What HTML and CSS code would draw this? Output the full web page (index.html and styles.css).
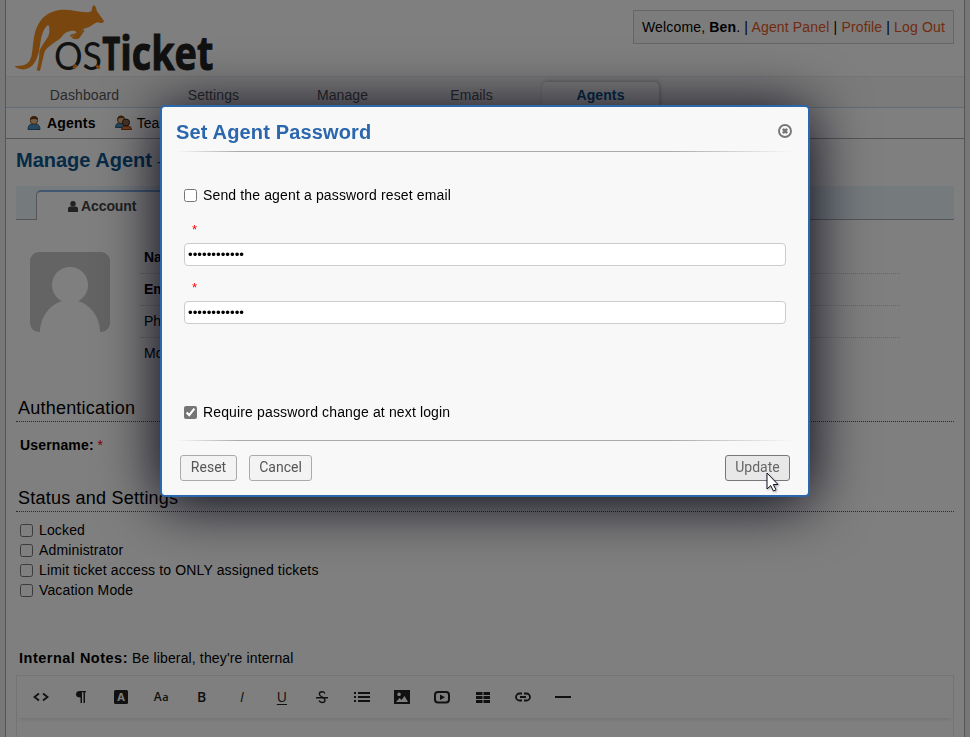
FILE: index.html
```html
<!DOCTYPE html>
<html lang="en">
<head>
<meta charset="utf-8">
<title>osTicket :: Staff Control Panel</title>
<link rel="stylesheet" href="styles.css">
</head>
<body>
<div class="page">
  <header class="header">
    <svg class="logo" viewBox="0 0 640 222" aria-label="osTicket">
      <path fill="#f38c1f" d="M44 198C74 199 89 193 95 166C99 143 99 120 106 94C116 60 140 35 178 30C208 26 233 36 260 37C268 36 272 35 275 32C275 25 278 18 281 15C288 18 289 26 290 32C294 38 298 43 302 49L312 63C311 69 305 71 292 67C282 70 277 77 265 82L250 87C240 95 241 111 231 117C226 119 221 117 220 115L213 111C216 109 222 110 226 105C231 100 231 95 222 92C207 91 193 97 184 112C176 121 158 130 145 142C132 153 134 157 129 175L120 213L110 211C114 196 118 178 118 157C118 145 135 126 145 108C151 94 148 77 144 75C135 82 128 94 124 112C119 140 117 166 106 184C95 205 76 211 60 207C52 205 47 202 44 198Z"/>
      <path fill="none" stroke="#f38c1f" stroke-width="6" stroke-linecap="round" d="M250 92L235 113L220 113M235 100L213 107"/>
      <text class="logo-os" x="162" y="209" textLength="144" lengthAdjust="spacingAndGlyphs">OS</text>
      <text class="logo-ticket" y="210"><tspan x="307" textLength="54" lengthAdjust="spacingAndGlyphs">T</tspan><tspan x="361" textLength="279" lengthAdjust="spacingAndGlyphs">icket</tspan></text>
      <path stroke="#f38c1f" stroke-width="9" d="M220 205l10-10M289 197l10 8"/>
    </svg>
    <p class="info">Welcome, <b>Ben</b>. | <a>Agent Panel</a> | <a>Profile</a> | <a>Log Out</a></p>
  </header>
  <nav class="nav">
    <a>Dashboard</a><a>Settings</a><a>Manage</a><a>Emails</a><a class="active">Agents</a>
  </nav>
  <nav class="subnav">
    <a class="current"><svg width="16" height="16" viewBox="0 0 16 16"><path fill="#4c8fc0" stroke="#2b5d80" d="M2 14.500q0-5 4-5.500h4q4 .5 4 5.500z"/><circle cx="8" cy="5.500" r="3.700" fill="#eab88a" stroke="#8a5a30"/><path fill="#704214" d="M4 5q0-4 4-4t4 4q-4-2-8 0"/></svg>Agents</a>
    <a><svg width="17" height="16" viewBox="0 0 17 16"><path fill="#4c8fc0" stroke="#2b5d80" d="M.5 12.500q0-4 3-4.500h5l2 4.500z"/><circle cx="6" cy="5" r="3.500" fill="#eab88a" stroke="#704214"/><path fill="#704214" d="M2 4q1-3.500 4-3.500t4 3q-4-1-8 .5"/><path fill="#e87532" stroke="#8f4016" d="M6.500 14.500q0-3 3-3.500h4q3 .5 3 3.500z"/><circle cx="11" cy="7.500" r="3.500" fill="#94694f" stroke="#352018"/></svg>Teams</a>
  </nav>
  <main class="content">
    <h2>Manage Agent <span>— Ben</span></h2>
    <div class="tabs"><a><svg width="10" height="11" viewBox="0 0 11 12"><circle cx="5.500" cy="3" r="3"/><path d="M0 12V9q0-3 2.500-3h6Q11 6 11 9v3z"/></svg>Account</a></div>
    <section class="profile">
      <svg class="avatar" width="80" height="80" viewBox="0 0 80 80"><rect width="80" height="80" rx="9" fill="#c8c8c8"/><circle cx="40" cy="33" r="18" fill="#fff"/><path fill="#fff" d="M10 80C10 64 22 48 40 48S70 64 70 80z"/></svg>
      <div class="fields"><div><b>Name:</b></div><div><b>Email:</b></div><div>Phone:</div><div>Mobile:</div></div>
    </section>
    <h3>Authentication</h3>
    <p class="username"><b>Username:</b> <span>*</span></p>
    <h3>Status and Settings</h3>
    <div class="checks">
      <label><input type="checkbox">Locked</label>
      <label><input type="checkbox">Administrator</label>
      <label><input type="checkbox">Limit ticket access to ONLY assigned tickets</label>
      <label><input type="checkbox">Vacation Mode</label>
    </div>
    <p class="notes"><b>Internal Notes:</b> Be liberal, they're internal</p>
    <div class="editor">
      <div class="toolbar">
        <i><svg viewBox="0 0 16 16" fill="none" stroke="#222" stroke-width="1.800"><path d="M6 4.500L1.500 8 6 11.500M10 4.500L14.500 8 10 11.500"/></svg></i>
        <i><svg viewBox="0 0 16 16"><path d="M7 2h6v1.300h-1V14h-1.500V3.300H9V14H7.500V8.500Q3 8.500 3 5.300T7 2z"/></svg></i>
        <i><svg viewBox="0 0 16 16"><rect x="1" y="1" width="14" height="14" rx="1.500"/><text class="ic-inv" x="8" y="12">A</text></svg></i>
        <i class="aa">A<small>a</small></i>
        <i class="bold">B</i>
        <i class="ital">I</i>
        <i class="under">U</i>
        <i class="strike"><svg viewBox="0 0 16 16" fill="none" stroke="#222" stroke-width="1.400"><path d="M11 4.500Q10 2.700 8 2.700 5.300 2.700 5.300 5q0 1.500 2.700 3 3 1.500 3 3.200Q11 13.500 8 13.500 6 13.500 5 11.700M2 8.700h12"/></svg></i>
        <i><svg viewBox="0 0 16 16"><path d="M0 3h2v2H0zm4 0h12v2H4zM0 7h2v2H0zm4 0h12v2H4zM0 11h2v2H0zm4 0h12v2H4z"/></svg></i>
        <i><svg viewBox="0 0 16 16"><path fill-rule="evenodd" d="M0 1h16v14H0zM5 3.500a1.800 1.800 0 1 0 .1 0zM2 13h12l-3.500-6-3 4-2-2z"/></svg></i>
        <i><svg viewBox="0 0 16 16"><rect x="1" y="3" width="14" height="10.500" rx="3" fill="none" stroke="#222" stroke-width="2"/><path d="M6 5.500l5 2.700-5 2.700z"/></svg></i>
        <i><svg viewBox="0 0 16 16"><path d="M1 3h6.500v3H1zm7.500 0H15v3H8.500zM1 7h6.500v3H1zm7.500 0H15v3H8.500zM1 11h6.500v3H1zm7.500 0H15v3H8.500z"/></svg></i>
        <i><svg viewBox="0 0 16 16" fill="none" stroke="#222" stroke-width="1.800"><path d="M7 4.500H4.500a3.500 3.500 0 0 0 0 7H7M9 4.500h2.500a3.500 3.500 0 0 1 0 7H9M5 8h6"/></svg></i>
        <i><svg viewBox="0 0 16 16"><path d="M0 7h16v2H0z"/></svg></i>
      </div>
    </div>
  </main>
</div>
<div class="overlay"></div>
<div class="dialog" role="dialog">
  <div class="title"><h1>Set Agent Password</h1>
    <svg width="14" height="14" viewBox="0 0 14 14"><circle cx="7" cy="7" r="6" fill="none" stroke="#777" stroke-width="1.900"/><path d="M4.900 4.900l4.200 4.200M9.100 4.900L4.900 9.100" stroke="#777" stroke-width="2.600"/></svg></div>
  <div class="rule"></div>
  <form>
    <label class="send"><input type="checkbox">Send the agent a password reset email</label>
    <div class="req">*</div>
    <input class="pw" type="password" value="abcdefghijkl">
    <div class="req second">*</div>
    <input class="pw" type="password" value="abcdefghijkl">
    <label class="require"><input type="checkbox" checked>Require password change at next login</label>
  </form>
  <div class="rule"></div>
  <div class="buttons"><button>Reset</button><button>Cancel</button><button class="update">Update</button></div>
  <svg class="cursor" width="14" height="22" viewBox="0 0 14 22"><path fill="#fff" stroke="#112" d="M1 1v16l3.700-3.500 2.700 5.500 2.600-1.200-2.700-5.300H12z"/></svg>
</div>
</body>
</html>
```
FILE: styles.css
```css
* { box-sizing: border-box; }
body { margin: 0; height: 737px; overflow: hidden; background: #eee; color: #000; font: 14px/20px "Liberation Sans", Arial, sans-serif; white-space: nowrap; }
h1, h2, h3, p { margin: 0; }
.page { width: 960px; height: 760px; margin-left: 5px; background: #fff; border: solid #aaa; border-width: 0 1px; }
.header { height: 76px; display: flex; justify-content: space-between; align-items: flex-start; padding-right: 10px; }
.logo { width: 213.3px; height: 74px; margin-left: -6px; overflow: visible; }
.logo-os { font: 400 114px Lato, sans-serif; fill: #222; }
.logo-ticket { font: 700 142px "Open Sans", sans-serif; fill: #222; stroke: #222; stroke-width: 3px; }
.info { margin-top: 10px; height: 34px; width: 321px; padding: 6px 8px; border: 1px solid #ccc; background: #f8f8f8; letter-spacing: .16px; }
.info a { color: #e65524; }
.nav { height: 32px; display: flex; gap: 12px; padding: 5px 0 0 20px; background: #f7f7f7; border-top: 1px solid #eaeaea; border-bottom: 1px solid #c5d9ec; }
.nav a { width: 117px; height: 26px; line-height: 27px; text-align: center; color: #555; letter-spacing: .1px; }
.nav .active { color: #0a568e; font-weight: bold; background: #fbfbfb; border-radius: 5px 5px 0 0; box-shadow: 1px -1px 4px #bbb; }
.subnav { height: 31px; display: flex; gap: 19px; padding-left: 20px; border-bottom: 1px solid #aaa; line-height: 30px; }
.subnav a { display: flex; align-items: center; gap: 5px; }
.subnav .current { font-weight: bold; letter-spacing: .2px; }
.content { padding: 0 10px; }
h2 { height: 47px; line-height: 42px; font-size: 20px; color: #0a568e; }
h2 span { font-weight: normal; font-size: 16px; }
.tabs { height: 34px; background: #eaf4fb; border-bottom: 1px solid #aaa; padding: 4px 0 0 20px; }
.tabs a { display: flex; gap: 3px; align-items: center; width: 132px; height: 30px; padding-left: 31px; border: 1px solid #aaa; border-top: 2px solid #84b0e3; border-bottom: 0; border-radius: 5px 5px 0 0; background: #fff; color: #444; font-weight: bold; letter-spacing: -.1px; }
.tabs svg { fill: #444; }
.profile { display: flex; gap: 30px; height: 170px; padding: 32px 0 0 14px; }
.fields { width: 760px; margin-top: -10px; }
.fields div { height: 32px; line-height: 31px; padding-left: 4px; border-bottom: 1px dotted #ccc; }
.fields div:last-child { border: 0; }
h3 { height: 32px; line-height: 37px; padding-left: 2px; border-bottom: 1px dotted #555; font-size: 18px; font-weight: normal; letter-spacing: .22px; }
.username { height: 58px; padding: 13px 4px 0; }
.username b { letter-spacing: .15px; }
.username span { color: #f00; }
.checks { padding: 8px 0 0 4px; height: 136px; }
label { display: flex; align-items: center; height: 20px; gap: 6px; letter-spacing: .14px; }
input[type=checkbox] { margin: 1px 0 0; width: 13px; height: 13px; accent-color: #757575; }
.notes { height: 27px; padding-left: 3px; letter-spacing: .14px; }
.notes b { font-size: 14.500px; letter-spacing: .5px; }
.editor { height: 90px; border: 1px solid #e8e8e8; }
.toolbar { height: 42px; padding-left: 4px; display: flex; align-items: center; box-shadow: 0 3px 4px -2px #ddd; }
.toolbar i { width: 40.15px; display: flex; justify-content: center; align-items: center; height: 20px; font: 600 14px/18px "Open Sans", sans-serif; color: #222; }
.toolbar svg { width: 16px; height: 16px; fill: #222; }
.toolbar svg[fill=none] { fill: none; }
.toolbar .ic-inv { fill: #fff; font: bold 11px "Open Sans", sans-serif; text-anchor: middle; }
.toolbar .aa { font-size: 12px; letter-spacing: .7px; }
.aa small { font-size: 11px; }
.toolbar .ital { font-style: italic; font-weight: 400; }
.toolbar .under { text-decoration: underline; text-underline-offset: 2px; font-weight: 400; }
.overlay { position: fixed; inset: 0; background: rgba(0, 0, 0, .5); }
.dialog { position: absolute; left: 160px; top: 105px; width: 650px; height: 392px; background: #f8f8f8; border: 2px solid #2a67ac; border-radius: 5px; box-shadow: 0 5px 60px #001; padding: 0 15px; }
.title { display: flex; justify-content: space-between; align-items: center; height: 44px; padding: 5px 1px 0 0; }
.title svg { margin-bottom: 1px; }
.title h1 { margin-left: -1px; font-size: 20px; color: #2a67ac; letter-spacing: .15px; }
.rule { height: 1px; background: linear-gradient(to right, transparent, #aaa 10%, #aaa 80%, transparent); }
form { height: 288px; padding: 33px 7px 0; }
.req { height: 38px; padding: 15px 0 0 8px; color: #f00; font-size: 13px; }
.req.second { height: 35px; padding-top: 12px; }
.pw { display: block; width: 602px; height: 23px; border: 1px solid #ccc; border-radius: 4px; padding: 0 3px; font: 13.333px "Liberation Sans", sans-serif; background: #fff; }
.require { margin-top: 78px; }
.buttons { display: flex; gap: 12px; padding: 14px 3px; }
button { height: 26px; padding: 0 0 2px; font: 14px Roboto, sans-serif; width: 57px; color: #555; background: #f3f3f3; border: 1px solid #aaa; border-radius: 3px; }
button:nth-child(2) { width: 63px; }
.update { width: 65px; margin-left: auto; color: #666; background: #e8e8e8; border-color: #777; }
.cursor { position: absolute; left: 604px; top: 365px; filter: drop-shadow(1px 1px 1px #0005); }
```
